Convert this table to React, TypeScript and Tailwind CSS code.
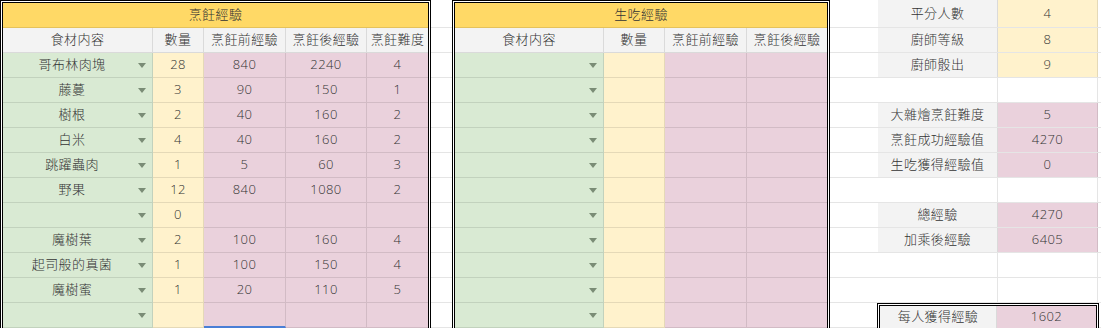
import type { ReactNode } from 'react'

type Row = { name: string; qty: string; before: string; after: string; level: string }

const cookRows: Row[] = [
  { name: '哥布林肉塊', qty: '28', before: '840', after: '2240', level: '4' },
  { name: '藤蔓', qty: '3', before: '90', after: '150', level: '1' },
  { name: '樹根', qty: '2', before: '40', after: '160', level: '2' },
  { name: '白米', qty: '4', before: '40', after: '160', level: '2' },
  { name: '跳躍蟲肉', qty: '1', before: '5', after: '60', level: '3' },
  { name: '野果', qty: '12', before: '840', after: '1080', level: '2' },
  { name: '', qty: '0', before: '', after: '', level: '' },
  { name: '魔樹葉', qty: '2', before: '100', after: '160', level: '4' },
  { name: '起司般的真菌', qty: '1', before: '100', after: '150', level: '4' },
  { name: '魔樹蜜', qty: '1', before: '20', after: '110', level: '5' },
  { name: '', qty: '', before: '', after: '', level: '' },
]

type Stat = { label: string; value: string; tone: 'yellow' | 'pink' } | null

const stats: Stat[] = [
  { label: '平分人數', value: '4', tone: 'yellow' },
  { label: '廚師等級', value: '8', tone: 'yellow' },
  { label: '廚師骰出', value: '9', tone: 'yellow' },
  null,
  { label: '大雜燴烹飪難度', value: '5', tone: 'pink' },
  { label: '烹飪成功經驗值', value: '4270', tone: 'pink' },
  { label: '生吃獲得經驗值', value: '0', tone: 'pink' },
  null,
  { label: '總經驗', value: '4270', tone: 'pink' },
  { label: '加乘後經驗', value: '6405', tone: 'pink' },
  null,
  null,
]

function Arrow() {
  return (
    <svg width="8" height="5" viewBox="0 0 8 5" className="shrink-0">
      <path d="M0 0h8L4 5z" fill="#7a8c76" />
    </svg>
  )
}

function NameCell({ name }: { name: string }) {
  return (
    <div className="flex h-[25px] items-center border-r border-b border-black/10 bg-[#d9ead3] pl-[3px] pr-[6px]">
      <span className="flex-1 text-center">{name}</span>
      <Arrow />
    </div>
  )
}

function Cell({ children, className = '' }: { children?: ReactNode; className?: string }) {
  return (
    <div className={`flex h-[25px] items-center justify-center border-r border-b border-black/10 ${className}`}>
      {children}
    </div>
  )
}

function GapColumn({ className }: { className: string }) {
  return (
    <div className={`flex shrink-0 flex-col ${className}`}>
      <div className="h-[28px] border-b border-black/10" />
      {Array.from({ length: 12 }).map((_, i) => (
        <div key={i} className="h-[25px] shrink-0 border-b border-black/10" />
      ))}
    </div>
  )
}

function CookTable() {
  return (
    <div className="w-[431px] shrink-0 self-start border-[3px] border-double border-black">
      <div className="flex h-[25px] items-center justify-center border-b border-black/10 bg-[#ffd966]">
        烹飪經驗
      </div>
      <div className="grid grid-cols-[150px_51px_82px_81px_61px] bg-[#f3f3f3]">
        <Cell>食材内容</Cell>
        <Cell>數量</Cell>
        <Cell>烹飪前經驗</Cell>
        <Cell>烹飪後經驗</Cell>
        <Cell className="border-r-0">烹飪難度</Cell>
      </div>
      {cookRows.map((row, i) => (
        <div key={i} className="grid grid-cols-[150px_51px_82px_81px_61px]">
          <NameCell name={row.name} />
          <Cell className="bg-[#fff2cc]">{row.qty}</Cell>
          <Cell
            className={
              i === cookRows.length - 1
                ? 'bg-[#ead1dc] border-b-2 border-b-[#4a7fd6]'
                : 'bg-[#ead1dc]'
            }
          >
            {row.before}
          </Cell>
          <Cell className="bg-[#ead1dc]">{row.after}</Cell>
          <Cell className="border-r-0 bg-[#ead1dc]">{row.level}</Cell>
        </div>
      ))}
    </div>
  )
}

function RawTable() {
  return (
    <div className="w-[378px] shrink-0 self-start border-[3px] border-double border-black">
      <div className="flex h-[25px] items-center justify-center border-b border-black/10 bg-[#ffd966]">
        生吃經驗
      </div>
      <div className="grid grid-cols-[149px_61px_82px_80px] bg-[#f3f3f3]">
        <Cell>食材内容</Cell>
        <Cell>數量</Cell>
        <Cell>烹飪前經驗</Cell>
        <Cell className="border-r-0">烹飪後經驗</Cell>
      </div>
      {Array.from({ length: 11 }).map((_, i) => (
        <div key={i} className="grid grid-cols-[149px_61px_82px_80px]">
          <NameCell name="" />
          <Cell className="bg-[#fff2cc]" />
          <Cell className="bg-[#ead1dc]" />
          <Cell className="border-r-0 bg-[#ead1dc]" />
        </div>
      ))}
    </div>
  )
}

function StatsPanel() {
  return (
    <div className="flex w-[221px] shrink-0 flex-col">
      {stats.map((s, i) => (
        <div
          key={i}
          className={`grid shrink-0 grid-cols-[120px_100px] border-b border-black/10 ${i === 0 ? 'h-[28px]' : 'h-[25px]'}`}
        >
          <div className={`flex items-center justify-center border-r border-black/10 ${s ? 'bg-[#f3f3f3]' : ''}`}>
            {s?.label}
          </div>
          <div
            className={`flex items-center justify-center border-r border-black/10 ${
              s ? (s.tone === 'yellow' ? 'bg-[#fff2cc]' : 'bg-[#ead1dc]') : ''
            }`}
          >
            {s?.value}
          </div>
        </div>
      ))}
      <div className="-ml-px flex h-[28px] shrink-0 border-[3px] border-double border-black">
        <div className="flex w-[117px] items-center justify-center border-r border-black/10 bg-[#f3f3f3]">
          每人獲得經驗
        </div>
        <div className="flex flex-1 items-center justify-center bg-[#ead1dc]">1602</div>
      </div>
    </div>
  )
}

export default function App() {
  return (
    <div className="flex h-[328px] w-[1101px] overflow-hidden bg-white font-['Open_Sans','Noto_Sans_CJK_TC',sans-serif] text-[13px] font-light tracking-[0.4px] text-[#333]">
      <CookTable />
      <GapColumn className="w-[21px]" />
      <RawTable />
      <GapColumn className="w-[48px]" />
      <StatsPanel />
      <GapColumn className="flex-1" />
    </div>
  )
}
